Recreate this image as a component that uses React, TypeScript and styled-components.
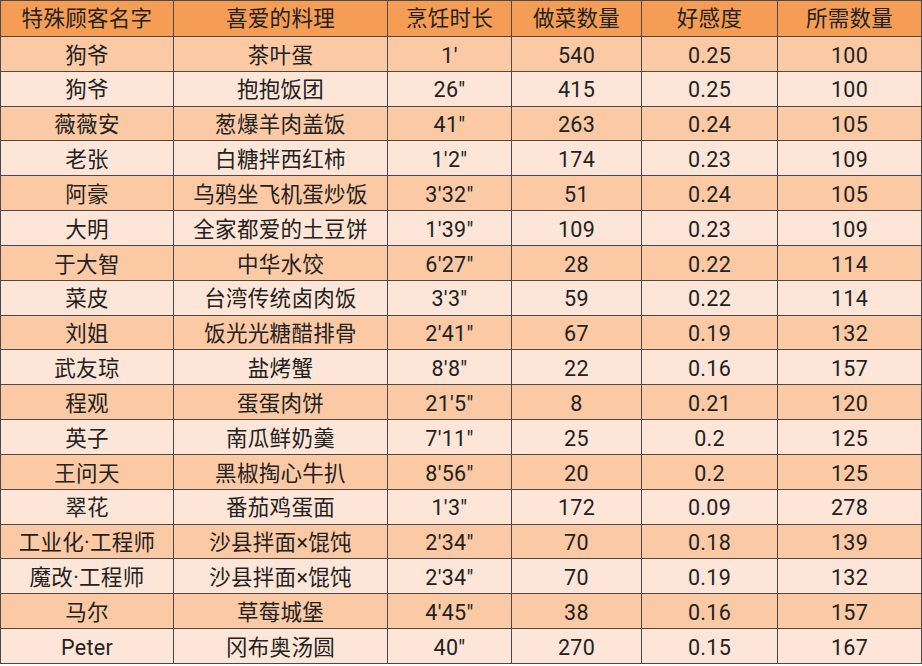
import React from 'react';
import styled, { createGlobalStyle } from 'styled-components';

const GlobalStyle = createGlobalStyle`
  html, body {
    margin: 0;
    padding: 0;
    background: #ffffff;
  }
  body {
    font-family: Roboto, "Noto Sans CJK SC", sans-serif;
  }
`;

const columns = ['特殊顾客名字', '喜爱的料理', '烹饪时长', '做菜数量', '好感度', '所需数量'];
const widths = [173, 214, 124, 130, 136, 144];

const rows: string[][] = [
  ['狗爷', '茶叶蛋', "1'", '540', '0.25', '100'],
  ['狗爷', '抱抱饭团', '26"', '415', '0.25', '100'],
  ['薇薇安', '葱爆羊肉盖饭', '41"', '263', '0.24', '105'],
  ['老张', '白糖拌西红柿', "1'2\"", '174', '0.23', '109'],
  ['阿豪', '乌鸦坐飞机蛋炒饭', "3'32\"", '51', '0.24', '105'],
  ['大明', '全家都爱的土豆饼', "1'39\"", '109', '0.23', '109'],
  ['于大智', '中华水饺', "6'27\"", '28', '0.22', '114'],
  ['菜皮', '台湾传统卤肉饭', "3'3\"", '59', '0.22', '114'],
  ['刘姐', '饭光光糖醋排骨', "2'41\"", '67', '0.19', '132'],
  ['武友琼', '盐烤蟹', "8'8\"", '22', '0.16', '157'],
  ['程观', '蛋蛋肉饼', "21'5\"", '8', '0.21', '120'],
  ['英子', '南瓜鲜奶羹', "7'11\"", '25', '0.2', '125'],
  ['王问天', '黑椒掏心牛扒', "8'56\"", '20', '0.2', '125'],
  ['翠花', '番茄鸡蛋面', "1'3\"", '172', '0.09', '278'],
  ['工业化·工程师', '沙县拌面×馄饨', "2'34\"", '70', '0.18', '139'],
  ['魔改·工程师', '沙县拌面×馄饨', "2'34\"", '70', '0.19', '132'],
  ['马尔', '草莓城堡', "4'45\"", '38', '0.16', '157'],
  ['Peter', '冈布奥汤圆', '40"', '270', '0.15', '167'],
];

const Table = styled.table`
  border-collapse: collapse;
  table-layout: fixed;
  width: 921px;
  height: 664px;
  color: #222222;
  font-size: 21.5px;
`;

const HeadCell = styled.th`
  height: 35px;
  padding: 0;
  font-weight: 400;
  text-align: center;
  background: #f69d55;
  border: 1px solid #4a4a4a;
  line-height: 1;
  letter-spacing: 0.3px;
`;

const Row = styled.tr<{ $shade: boolean }>`
  background: ${({ $shade }) => ($shade ? '#fbc9a4' : '#fde6d7')};
`;

const Cell = styled.td`
  padding: 3px 0 0;
  text-align: center;
  border: 1px solid #4a4a4a;
  line-height: 1;
  white-space: nowrap;
  letter-spacing: 0.3px;
`;

export default function App() {
  return (
    <>
      <GlobalStyle />
      <Table>
        <colgroup>
          {widths.map((w, i) => (
            <col key={i} style={{ width: w }} />
          ))}
        </colgroup>
        <thead>
          <tr>
            {columns.map((c) => (
              <HeadCell key={c}>{c}</HeadCell>
            ))}
          </tr>
        </thead>
        <tbody>
          {rows.map((r, i) => (
            <Row key={i} $shade={i % 2 === 0}>
              {r.map((v, j) => (
                <Cell key={j}>{v}</Cell>
              ))}
            </Row>
          ))}
        </tbody>
      </Table>
    </>
  );
}
